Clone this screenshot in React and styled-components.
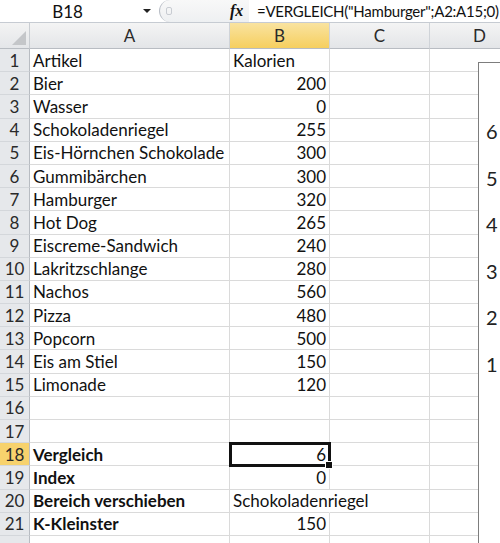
import * as React from 'react';
import styled, { createGlobalStyle, css } from 'styled-components';

const Global = createGlobalStyle`
  html, body { margin: 0; padding: 0; background: #fff; }
  body { font-family: Lato, "Open Sans", sans-serif; overflow: hidden; }
`;

const Sheet = styled.div`
  position: relative;
  width: 500px;
  height: 543px;
  overflow: hidden;
  background: #fff;
`;

const FormulaBar = styled.div`
  display: flex;
  align-items: center;
  height: 22px;
  border-bottom: 1px solid #c6cbd2;
  font-size: 17px;
  color: #111;
`;

const NameBox = styled.div`
  position: relative;
  flex-shrink: 0;
  width: 155px;
  height: 100%;
  display: flex;
  align-items: center;
  justify-content: center;
  padding-right: 20px;
  box-sizing: border-box;
`;

const Arrow = styled.span`
  position: absolute;
  right: 4px;
  top: 9px;
  width: 0;
  height: 0;
  border-left: 4px solid transparent;
  border-right: 4px solid transparent;
  border-top: 4px solid #222;
`;

const Notch = styled.div`
  flex-shrink: 0;
  width: 90px;
  height: 100%;
  display: flex;
  align-items: center;
  background: linear-gradient(#f8f8f8, #eef0f2);
  border-left: 1px solid #b9bec6;
  border-radius: 12px 0 0 12px;
  margin-left: 4px;
  padding-left: 6px;
  box-sizing: border-box;
  gap: 58px;
`;

const Grip = styled.span`
  width: 4px;
  height: 6px;
  border: 1px solid #c8ccd2;
  border-radius: 2px;
`;

const Fx = styled.span`
  font-family: "Liberation Serif", serif;
  font-style: italic;
  font-weight: bold;
  font-size: 16px;
`;

const Formula = styled.div`
  flex: 1;
  min-width: 0;
  padding-left: 8px;
  white-space: nowrap;
  overflow: hidden;
  font-size: 15px;
  letter-spacing: -0.25px;
`;

const Grid = styled.div`
  display: grid;
  grid-template-columns: 30px 200px 100px 100px 100px;
  grid-template-rows: 26px;
  grid-auto-rows: 23.2px;
  font-size: 17px;
  color: #111;
`;

const Corner = styled.div`
  position: relative;
  background: linear-gradient(#f3f3f3, #e4e6e9);
  border-right: 1px solid #c9cdd2;
  border-bottom: 1px solid #b8bcc2;
  &::after {
    content: '';
    position: absolute;
    right: 3px;
    bottom: 3px;
    width: 0;
    height: 0;
    border-left: 14px solid transparent;
    border-bottom: 14px solid #c4c6c9;
  }
`;

const ColHead = styled.div`
  display: flex;
  align-items: center;
  justify-content: center;
  border-right: 1px solid #cfd3d8;
  border-bottom: 1px solid #b8bcc2;
  color: #2a2a2a;
  background: ${({ $active }) =>
    $active ? 'linear-gradient(#f9e3a0, #f6cf5f)' : 'linear-gradient(#f4f4f4, #e3e5e8)'};
`;

const RowHead = styled.div`
  display: flex;
  align-items: center;
  justify-content: center;
  border-right: 1px solid #b8bcc2;
  border-bottom: 1px solid #d4d7db;
  color: #2a2a2a;
  background: ${({ $active }) => ($active ? '#f7d26d' : '#e6e8eb')};
`;

const Cell = styled.div`
  position: relative;
  display: flex;
  align-items: center;
  justify-content: ${({ $num }) => ($num ? 'flex-end' : 'flex-start')};
  padding: 0 3px;
  box-sizing: border-box;
  border-right: 1px solid ${({ $noRight }) => ($noRight ? 'transparent' : '#dadada')};
  border-bottom: 1px solid #dadada;
  white-space: nowrap;
  font-weight: ${({ $bold }) => ($bold ? 700 : 400)};
  overflow: visible;
  z-index: ${({ $over }) => ($over ? 2 : 1)};
  ${({ $selected }) =>
    $selected &&
    css`
      outline: 3px solid #111;
      outline-offset: -2px;
      z-index: 3;
      &::after {
        content: '';
        position: absolute;
        right: -4px;
        bottom: -4px;
        width: 6px;
        height: 6px;
        background: #111;
        border: 1px solid #fff;
      }
    `}
`;

const Chart = styled.div`
  position: absolute;
  left: 478px;
  top: 62px;
  width: 40px;
  height: 500px;
  background: #fff;
  border-left: 1px solid #7d7d7d;
  border-top: 1px solid #7d7d7d;
  z-index: 5;
  display: flex;
  flex-direction: column;
  padding: 56px 0 0 7px;
  box-sizing: border-box;
  gap: 22.6px;
  font-size: 20px;
  color: #222;
  line-height: 24px;
`;

const rows = [
  ['Artikel', 'Kalorien'],
  ['Bier', 200],
  ['Wasser', 0],
  ['Schokoladenriegel', 255],
  ['Eis-Hörnchen Schokolade', 300],
  ['Gummibärchen', 300],
  ['Hamburger', 320],
  ['Hot Dog', 265],
  ['Eiscreme-Sandwich', 240],
  ['Lakritzschlange', 280],
  ['Nachos', 560],
  ['Pizza', 480],
  ['Popcorn', 500],
  ['Eis am Stiel', 150],
  ['Limonade', 120],
  ['', ''],
  ['', ''],
  ['Vergleich', 6, true],
  ['Index', 0, true],
  ['Bereich verschieben', 'Schokoladenriegel', true],
  ['K-Kleinster', 150, true],
  ['', ''],
];

export default function App() {
  return (
    <Sheet>
      <Global />
      <FormulaBar>
        <NameBox>
          B18
          <Arrow />
        </NameBox>
        <Notch>
          <Grip />
          <Fx>fx</Fx>
        </Notch>
        <Formula>=VERGLEICH("Hamburger";A2:A15;0)</Formula>
      </FormulaBar>
      <Grid>
        <Corner />
        <ColHead>A</ColHead>
        <ColHead $active>B</ColHead>
        <ColHead>C</ColHead>
        <ColHead>D</ColHead>
        {rows.map(([a, b, bold], i) => {
          const n = i + 1;
          const spill = n === 20;
          const isNum = typeof b === 'number';
          return (
            <React.Fragment key={n}>
              <RowHead $active={n === 18}>{n < 22 ? n : ''}</RowHead>
              <Cell $bold={bold}>{a}</Cell>
              <Cell $num={isNum} $selected={n === 18} $noRight={spill} $over={spill}>
                {b}
              </Cell>
              <Cell />
              <Cell />
            </React.Fragment>
          );
        })}
      </Grid>
      <Chart>
        {[6, 5, 4, 3, 2, 1].map((v) => (
          <span key={v}>{v}</span>
        ))}
      </Chart>
    </Sheet>
  );
}
